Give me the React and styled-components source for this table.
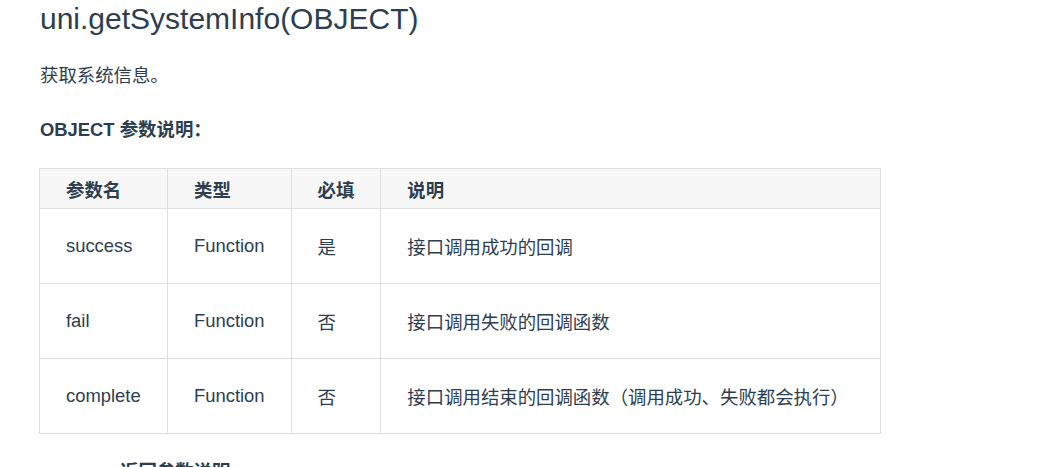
import React from "react";
import styled, { createGlobalStyle } from "styled-components";

const GlobalStyle = createGlobalStyle`
  body {
    margin: 0;
    background: #fff;
    color: #2c3e50;
    font-family: "Liberation Sans", Arial, "Noto Sans CJK SC", sans-serif;
    font-size: 18.4px;
  }
`;

const Page = styled.div`
  padding: 0 40px;
`;

const Title = styled.h1`
  margin: 0;
  font-size: 30px;
  font-weight: 400;
  line-height: 1.25;
`;

const Para = styled.p`
  margin: 22px 0 0;
  line-height: 1.7;
`;

const SubTitle = styled.p`
  margin: ${(p) => p.$top || "23px"} 0 0;
  padding-left: ${(p) => p.$indent || "0"};
  font-weight: 700;
  line-height: 1.7;
`;

const Table = styled.table`
  margin-top: 23px;
  margin-left: -1px;
  border-collapse: collapse;
  width: 842px;
`;

const Th = styled.th`
  height: 40px;
  padding: 0 26px;
  box-sizing: border-box;
  background: #f7f7f7;
  border: 1px solid #dfdfdf;
  text-align: left;
  font-weight: 700;
  white-space: nowrap;
  width: ${(p) => p.$w};
`;

const Td = styled.td`
  height: 75px;
  padding: 0 26px;
  box-sizing: border-box;
  border: 1px solid #dfdfdf;
  text-align: left;
  vertical-align: middle;
  white-space: nowrap;
`;

const columns = [
  { label: "参数名", w: "128px" },
  { label: "类型", w: "122px" },
  { label: "必填", w: "89px" },
  { label: "说明", w: "auto" },
];

const rows = [
  ["success", "Function", "是", "接口调用成功的回调"],
  ["fail", "Function", "否", "接口调用失败的回调函数"],
  ["complete", "Function", "否", "接口调用结束的回调函数（调用成功、失败都会执行）"],
];

function App() {
  return (
    <Page>
      <GlobalStyle />
      <Title>uni.getSystemInfo(OBJECT)</Title>
      <Para>获取系统信息。</Para>
      <SubTitle>OBJECT 参数说明：</SubTitle>
      <Table>
        <thead>
          <tr>
            {columns.map((c) => (
              <Th key={c.label} $w={c.w}>
                {c.label}
              </Th>
            ))}
          </tr>
        </thead>
        <tbody>
          {rows.map((r) => (
            <tr key={r[0]}>
              {r.map((cell, i) => (
                <Td key={i}>{cell}</Td>
              ))}
            </tr>
          ))}
        </tbody>
      </Table>
      <SubTitle $top="22px" $indent="80px">
        返回参数说明
      </SubTitle>
    </Page>
  );
}

export default App;
